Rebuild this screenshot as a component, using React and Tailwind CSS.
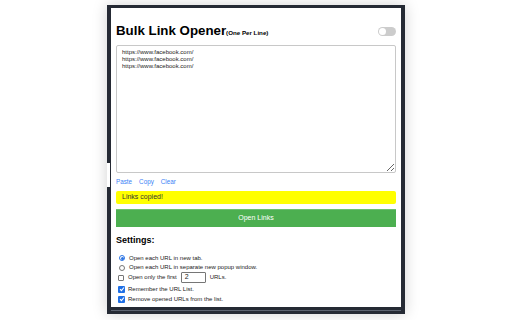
import React from "react";

function Radio({ checked }) {
  return (
    <span
      className={
        "flex h-[6px] w-[6px] shrink-0 items-center justify-center rounded-full border bg-white " +
        (checked ? "border-[#2b74e4]" : "border-[#767676]")
      }
    >
      {checked && <span className="h-[3px] w-[3px] rounded-full bg-[#2b74e4]" />}
    </span>
  );
}

function Check({ checked }) {
  return checked ? (
    <span className="flex h-[7px] w-[7px] shrink-0 items-center justify-center rounded-[1px] bg-[#1f6fe5]">
      <svg width="6" height="6" viewBox="0 0 6 6">
        <path d="M1 3.2 L2.4 4.6 L5 1.5" stroke="white" strokeWidth="1.1" fill="none" />
      </svg>
    </span>
  ) : (
    <span className="h-[6px] w-[6px] shrink-0 rounded-[1px] border border-[#767676] bg-white" />
  );
}

export default function App() {
  return (
    <div
      className="relative flex h-[320px] w-[512px] justify-center overflow-hidden bg-white pt-[5px]"
      style={{ fontFamily: '"Liberation Sans", Arial, sans-serif' }}
    >
      <div className="relative flex h-[309px] w-[298px] flex-col border-t-[3px] border-r-[4px] border-b-[7px] border-l-[4px] border-[#252a34] bg-white shadow-[0_0_14px_rgba(0,0,0,0.18)]">
        <div className="absolute bottom-[-4px] left-0 right-0 h-px bg-[#5c6370]" />
        <div className="absolute left-[-4px] top-[155px] h-[24px] w-[3px] bg-white" />
        <div className="flex flex-col px-[5px]">
          <div className="mt-[15px] flex h-[16px] items-center justify-between">
            <div className="flex items-baseline text-black">
              <span className="text-[13.3px] font-bold leading-[16px]">Bulk Link Opener</span>
              <span className="text-[6.2px] font-bold">(One Per Line)</span>
            </div>
            <div className="relative h-[9px] w-[18px] rounded-full bg-[#cccccc]">
              <span className="absolute left-[1px] top-[1px] h-[7px] w-[7px] rounded-full bg-white" />
            </div>
          </div>
          <textarea
            className="mt-[6px] h-[128px] w-full rounded-[2px] border border-[#c8c8c8] px-[5px] pt-[3px] text-[6px] leading-[7px] text-[#222] outline-none"
            defaultValue={"https://www.facebook.com/\nhttps://www.facebook.com/\nhttps://www.facebook.com/"}
          />
          <div className="mt-[5px] flex h-[8px] items-center gap-[7px] text-[6.3px] leading-[8px] text-[#3b82f6]">
            <span>Paste</span>
            <span>Copy</span>
            <span>Clear</span>
          </div>
          <div className="mt-[5px] flex h-[13px] items-center rounded-[2px] bg-[#ffff00] pl-[6px] text-[7px] text-[#333]">
            Links copied!
          </div>
          <div className="mt-[5px] flex h-[18px] items-center justify-center border-t border-[#6cc070] bg-[#4caf50] text-[7px] text-white">
            Open Links
          </div>
          <div className="mt-[8px] h-[11px] text-[9px] font-bold leading-[11px] text-black">Settings:</div>
          <div className="mt-[7px] flex flex-col text-[6px] text-[#222]">
            <div className="flex h-[10px] items-center gap-[4px] pl-[3px]">
              <Radio checked />
              <span>Open each URL in new tab.</span>
            </div>
            <div className="flex h-[9px] items-center gap-[4px] pl-[3px]">
              <Radio />
              <span>Open each URL in separate new popup window.</span>
            </div>
            <div className="flex h-[11px] items-center gap-[4px] pl-[2px]">
              <Check />
              <span>Open only the first</span>
              <span className="flex h-[11px] w-[25px] items-center rounded-[1px] border border-[#767676] pl-[3px] text-[7px]">
                2
              </span>
              <span>URLs.</span>
            </div>
            <div className="mt-px flex h-[10px] items-center gap-[3px] pl-[2px]">
              <Check checked />
              <span>Remember the URL List.</span>
            </div>
            <div className="flex h-[10px] items-center gap-[3px] pl-[2px]">
              <Check checked />
              <span>Remove opened URLs from the list.</span>
            </div>
          </div>
        </div>
      </div>
    </div>
  );
}
